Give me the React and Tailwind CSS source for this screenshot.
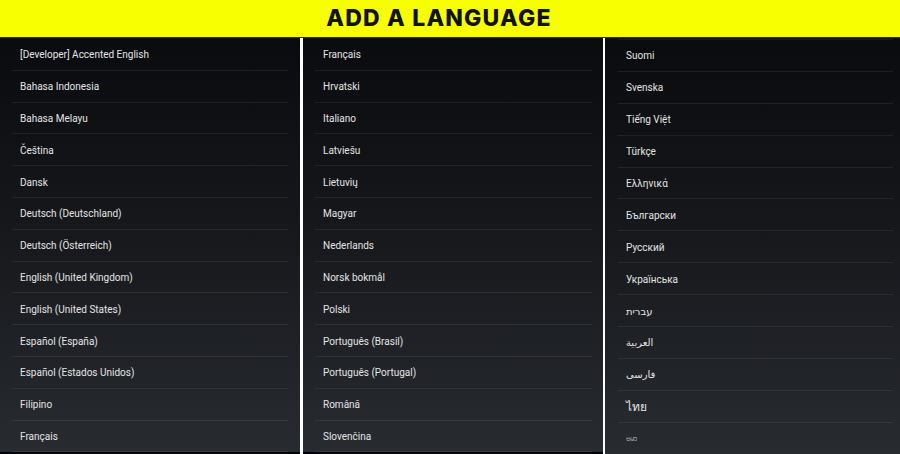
import React from "react";

const left = [
  "[Developer] Accented English",
  "Bahasa Indonesia",
  "Bahasa Melayu",
  "Čeština",
  "Dansk",
  "Deutsch (Deutschland)",
  "Deutsch (Österreich)",
  "English (United Kingdom)",
  "English (United States)",
  "Español (España)",
  "Español (Estados Unidos)",
  "Filipino",
  "Français",
];

const middle = [
  "Français",
  "Hrvatski",
  "Italiano",
  "Latviešu",
  "Lietuvių",
  "Magyar",
  "Nederlands",
  "Norsk bokmål",
  "Polski",
  "Português (Brasil)",
  "Português (Portugal)",
  "Română",
  "Slovenčina",
];

const right = [
  "Suomi",
  "Svenska",
  "Tiếng Việt",
  "Türkçe",
  "Ελληνικά",
  "Български",
  "Русский",
  "Українська",
  "עברית",
  "العربية",
  "فارسی",
  "ไทย",
  "ဗမာ",
];

const font = { fontFamily: "Roboto, 'Noto Sans', 'DejaVu Sans', sans-serif" };

function Row({ label, pitch, small, large }) {
  const size = small
    ? "text-[8px] text-[#d0d0d0]"
    : large
    ? "text-[12px] text-[#e4e4e4]"
    : "text-[10px] text-[#e4e4e4]";
  return (
    <div
      className={`flex items-center pl-[8px] pt-[2px] border-b border-white/[0.07] shrink-0 ${pitch}`}
    >
      <span className={`${size} leading-none`} style={font}>
        {label}
      </span>
    </div>
  );
}

function Panel({ items, className, inset, pitch, topRule, footer }) {
  return (
    <div
      className={`flex flex-col h-full bg-gradient-to-b from-[#0a0b0e] via-[#17191d] to-[#282b30] overflow-hidden ${className}`}
    >
      <div className={`flex flex-col ${inset} pt-[1px]`}>
        {topRule && <div className="h-px bg-white/[0.07] shrink-0" />}
        {items.map((l, i) => (
          <Row
            key={i}
            label={l}
            pitch={pitch}
            small={l === "ဗမာ"}
            large={l === "ไทย"}
          />
        ))}
      </div>
      {footer && <div className="flex-1 bg-black" />}
    </div>
  );
}

export default function App() {
  return (
    <div className="w-[900px] h-[454px] flex flex-col bg-white overflow-hidden">
      <div className="h-[38px] shrink-0 bg-[#f7ff00] flex items-center justify-center pr-[22px] border-b border-[#2a2a1a]">
        <h1
          className="text-[23px] font-extrabold text-[#111111] tracking-[1.2px] leading-none"
          style={{ fontFamily: "Inter, 'Open Sans', sans-serif" }}
        >
          ADD A LANGUAGE
        </h1>
      </div>
      <div className="flex flex-1 min-h-0">
        <Panel
          items={left}
          className="w-[300px] shrink-0"
          inset="pl-[12px] pr-[12px]"
          pitch="h-[31.8px]"
          footer
        />
        <Panel
          items={middle}
          className="w-[300px] ml-[3px] shrink-0"
          inset="pl-[12px] pr-[11px]"
          pitch="h-[31.8px]"
          footer
        />
        <Panel
          items={right}
          className="flex-1 ml-[2px]"
          inset="pl-[13px] pr-[7px]"
          pitch="h-[31.9px]"
          topRule
        />
      </div>
    </div>
  );
}
